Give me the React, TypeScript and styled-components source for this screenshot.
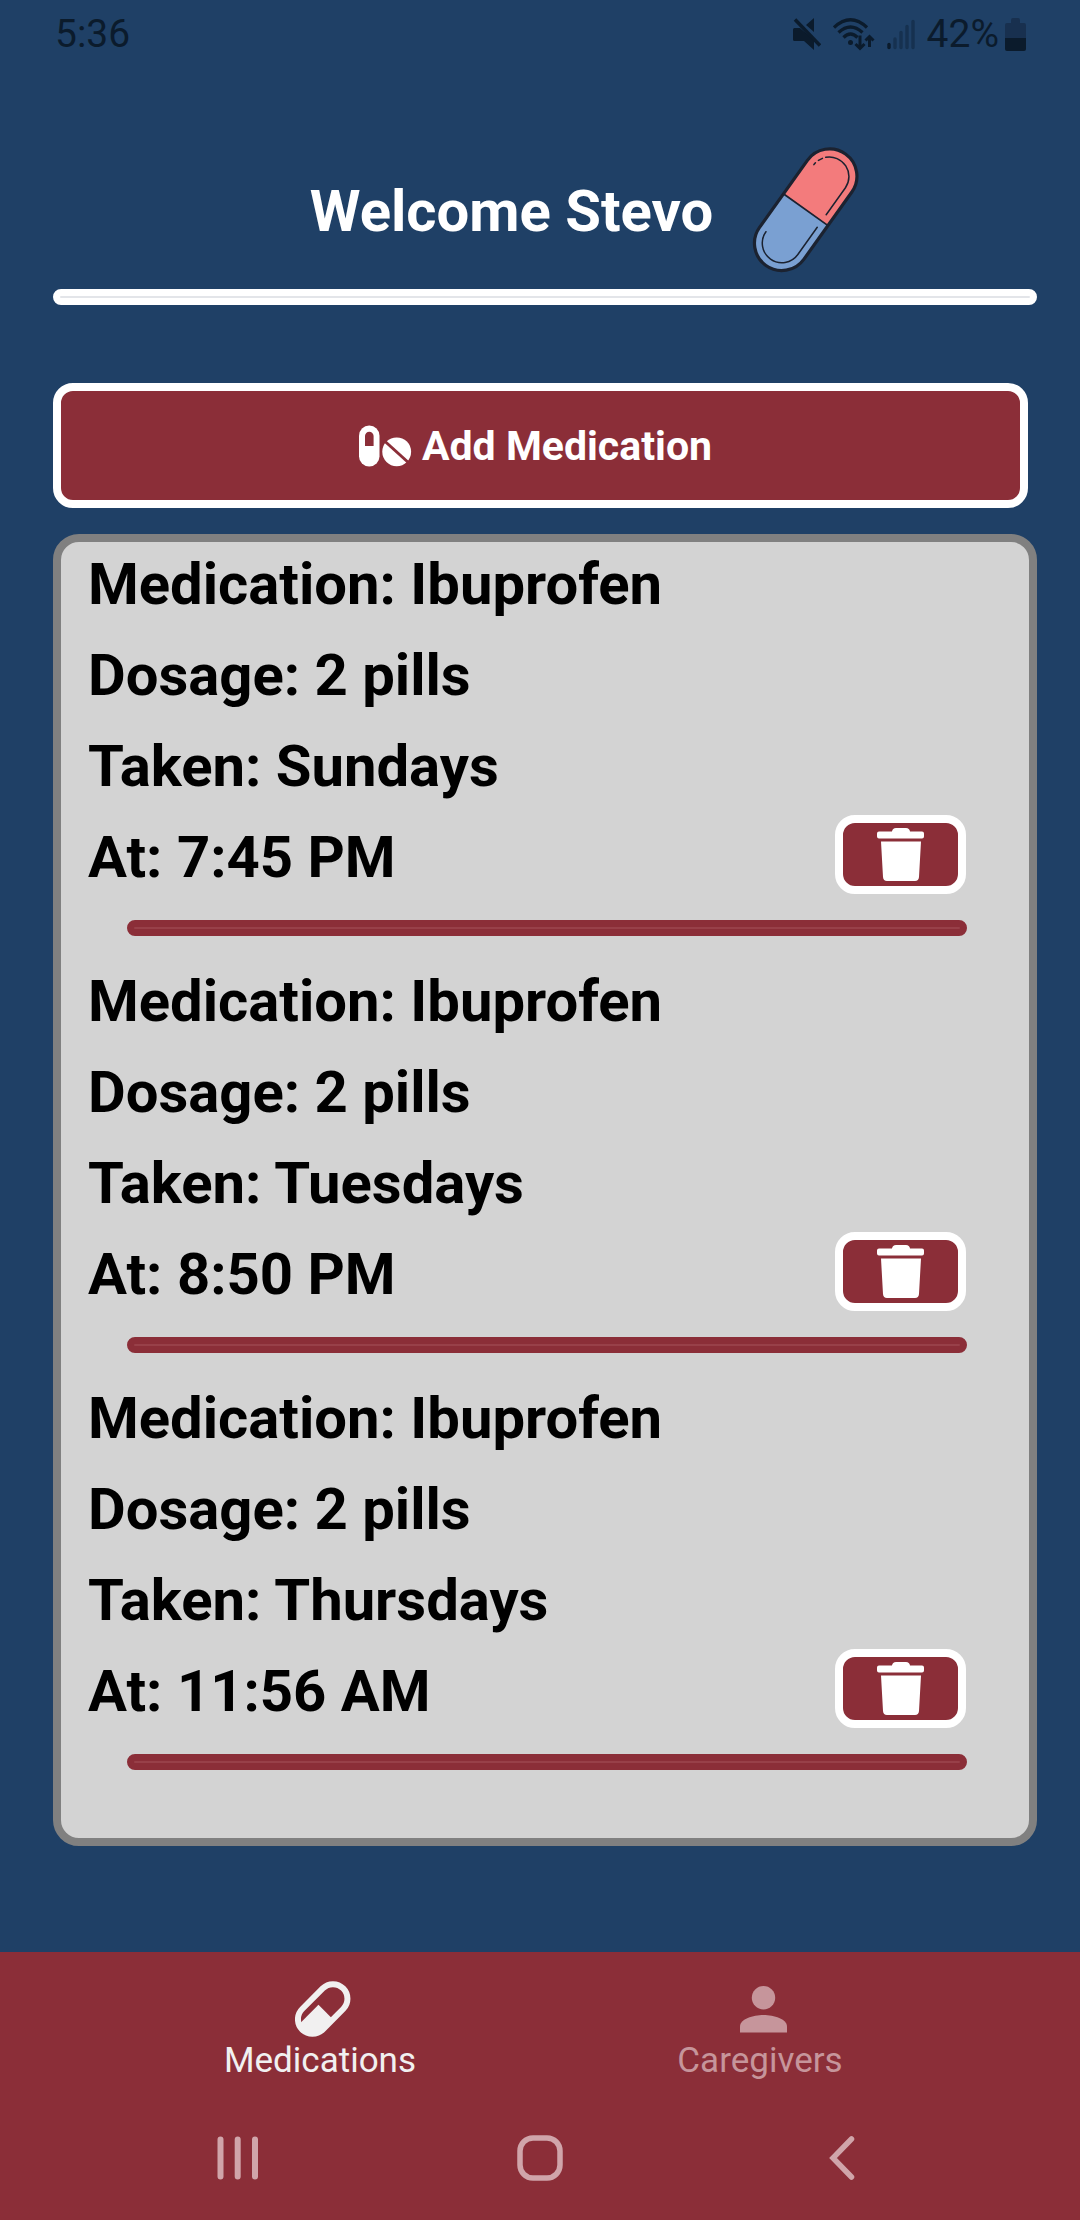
import React from "react";
import styled, { createGlobalStyle } from "styled-components";

const navy = "#1f4066";
const maroon = "#8b2e38";
const ink = "#0b1b2c";

const GlobalStyle = createGlobalStyle`
  *, *::before, *::after { box-sizing: border-box; }
  body { margin: 0; background: ${navy}; font-family: Roboto, "Noto Sans", sans-serif; }
  button { font: inherit; cursor: pointer; }
  svg { display: block; flex: none; }
`;

const Screen = styled.div`
  min-height: 100vh;
  display: flex;
  flex-direction: column;
  background: ${navy};
`;

const StatusBar = styled.div`
  display: flex;
  justify-content: space-between;
  align-items: center;
  padding: 11px 54px 0 55px;
  color: ${ink};
  font-size: 39px;
  line-height: 46px;
`;

const StatusIcons = styled.div`
  display: flex;
  align-items: center;
  gap: 12px;
`;

const Battery = styled.span`
  display: flex;
  align-items: center;
  gap: 6px;
`;

const Main = styled.main`
  flex: 1;
  display: flex;
  flex-direction: column;
  padding: 89px 43px 106px 53px;
`;

const Header = styled.header`
  display: flex;
  justify-content: center;
  align-items: center;
  gap: 39px;
  padding: 0 0 14px 80px;
`;

const Title = styled.h1`
  margin: 0;
  color: #fff;
  font-size: 58px;
  line-height: 68px;
  font-weight: 700;
`;

const Rule = styled.hr<{ $color: string; $line: string }>`
  width: 100%;
  height: 16px;
  margin: 0;
  border: 7px solid ${(p) => p.$color};
  border-radius: 8px;
  background: ${(p) => p.$line};
`;

const AddButton = styled.button`
  display: flex;
  justify-content: center;
  align-items: center;
  gap: 10px;
  height: 125px;
  margin: 78px 9px 26px 0;
  padding: 0 10px 0 0;
  border: 8px solid #fff;
  border-radius: 20px;
  background: ${maroon};
  color: #fff;
  font-size: 41px;
  line-height: 48px;
  font-weight: 700;
`;

const Card = styled.section`
  flex: 1;
  padding: 8px 62px 68px 27px;
  border: 8px solid #808080;
  border-radius: 26px;
  background: #d3d3d3;
`;

const List = styled.ul`
  display: flex;
  flex-direction: column;
  gap: 31px;
  margin: 0;
  padding: 0;
  list-style: none;
`;

const Item = styled.li`
  display: flex;
  flex-direction: column;
  gap: 23px;
  color: #000;
  font-size: 58px;
  line-height: 68px;
  font-weight: 700;
`;

const Line = styled.div`
  display: flex;
  justify-content: space-between;
  height: 68px;
`;

const Divider = styled.div`
  display: flex;
  padding: 6px 0 0 39px;
`;

const DeleteButton = styled.button`
  display: flex;
  justify-content: center;
  align-items: center;
  width: 131px;
  height: 79px;
  margin: -8px 1px 0 0;
  padding: 0;
  border: 8px solid #fff;
  border-radius: 20px;
  background: ${maroon};
`;

const Footer = styled.footer`
  background: ${maroon};
`;

const Tabs = styled.nav`
  display: grid;
  grid-template-columns: 1fr 1fr;
  padding: 26px 100px 0;
`;

const Tab = styled.a<{ $active?: boolean }>`
  display: flex;
  flex-direction: column;
  align-items: center;
  color: ${(p) => (p.$active ? "#f1f0f0" : "#c6959b")};
  font-size: 35px;
  line-height: 42px;
  text-decoration: none;
  svg { margin-left: 6px; }
`;

const SystemBar = styled.div`
  display: grid;
  grid-template-columns: repeat(3, 1fr);
  padding: 53px 87px 39px;
`;

const SystemButton = styled.button`
  display: flex;
  justify-content: center;
  align-items: center;
  padding: 0;
  border: 0;
  background: none;
  color: #d0a5aa;
`;

const MuteIcon = () => (
  <svg width="28" height="32" viewBox="0 0 28 32" fill={ink} aria-hidden="true">
    <path d="M0 11.500Q0 10 1.500 10H7L21 22v10l-10-9H1.500Q0 23 0 21.500zM21 0v14l-8-7z" />
    <path d="M2 1.500l25 26" stroke={ink} strokeWidth="3.500" />
  </svg>
);

const WifiIcon = () => (
  <svg width="42" height="33" viewBox="0 0 42 33" fill="none" stroke={ink} aria-hidden="true">
    <path d="M1 9.500Q17.500-6 34 9.500M5.500 14.500Q17.500 3.500 29.500 14.500M10.500 19.500Q17.500 12.500 24.500 19.500" strokeWidth="3.300" />
    <circle cx="17.500" cy="24.500" r="2.500" fill={ink} stroke="none" />
    <path d="M27 17.500v12M22.500 26l4.500 4.500 4.500-4.500M36.500 29v-10M32.500 22.500l4-4 4 4" strokeWidth="3" />
  </svg>
);

const SignalIcon = () => (
  <svg width="28" height="31" viewBox="0 0 28 31" strokeWidth="3.400" strokeLinecap="round" aria-hidden="true">
    <path d="M2 28.500v-3" stroke={ink} />
    <path d="M8 28.500v-8.500M14 28.500v-15M20 28.500v-21M26 28.500v-26" stroke="#163150" />
  </svg>
);

const BatteryIcon = () => (
  <svg width="21" height="33" viewBox="0 0 21 33" aria-hidden="true">
    <path d="M6 5V2q0-2 2-2h5q2 0 2 2v3h4q2 0 2 2v13H0V7q0-2 2-2z" fill="#18304f" />
    <path d="M0 20h21v11q0 2-2 2H2q-2 0-2-2z" fill={ink} />
  </svg>
);

const CapsuleDrawing = () => (
  <svg width="108" height="129" viewBox="0 0 108 129" aria-hidden="true">
    <g transform="translate(53.700 63.700) rotate(35.500)">
      <path d="M-27.300 0V-41A27.300 27.300 0 0 1 27.300-41V0z" fill="#f37b7c" />
      <path d="M-27.300 0V41A27.300 27.300 0 0 0 27.300 41V0z" fill="#7aa0d2" />
      <g fill="none" stroke="#1b2230" strokeLinecap="round">
        <rect x="-27.300" y="-68.500" width="54.600" height="137" rx="27.300" strokeWidth="3.200" />
        <path d="M-27 0H27" strokeWidth="1.800" />
        <path
          d="M-14.100-54.300A19.600 19.600 0 0 1 19.600-41V-7.800M-16.200-51.500L-18.200-47.500M-19.300-43.800L-19.500-41.500M-19.600 41A19.600 19.600 0 0 0 19.600 41V7.600"
          strokeWidth="1.500"
        />
      </g>
    </g>
  </svg>
);

const AddIcon = () => (
  <svg width="53" height="42" viewBox="0 0 53 42" aria-hidden="true">
    <rect x="0" y="0.500" width="20.500" height="41" rx="10.250" fill="#fff" />
    <path d="M6 21V11a4.300 4.300 0 0 1 8.600 0v10z" fill={maroon} />
    <circle cx="37.700" cy="26.800" r="14.400" fill="#fff" />
    <path d="M25 15.500l26 23.500" stroke={maroon} strokeWidth="3" />
  </svg>
);

const TrashIcon = () => (
  <svg width="48" height="54" viewBox="0 0 48 54" fill="#fff" aria-hidden="true">
    <path d="M2 3.500h13Q15.500 0 19 0h10q3.500 0 4 3.500h12q2 0 2 2v3q0 2-2 2H2q-2 0-2-2v-3q0-2 2-2zM4 13.500h40L42 49q-.300 4-4 4H10q-3.700 0-4-4z" />
  </svg>
);

const PillTabIcon = () => (
  <svg width="56" height="62" viewBox="0 0 56 62" aria-hidden="true">
    <g transform="translate(27.700 31) rotate(45)">
      <rect x="-14.500" y="-29" width="29" height="58" rx="14.500" fill="none" stroke="currentColor" strokeWidth="6" />
      <path d="M-6 0H13V15A13 13 0 0 1-6 26z" fill="currentColor" />
    </g>
  </svg>
);

const PersonIcon = () => (
  <svg width="47" height="62" viewBox="0 0 47 62" fill="currentColor" aria-hidden="true">
    <circle cx="23.500" cy="19.700" r="11.700" />
    <path d="M0 54.500v-6C0 41 13 37 23.500 37S47 41 47 48.500v6z" />
  </svg>
);

const medications = [
  { name: "Ibuprofen", dosage: "2 pills", days: "Sundays", time: "7:45 PM" },
  { name: "Ibuprofen", dosage: "2 pills", days: "Tuesdays", time: "8:50 PM" },
  { name: "Ibuprofen", dosage: "2 pills", days: "Thursdays", time: "11:56 AM" },
];

export default function App() {
  return (
    <>
      <GlobalStyle />
      <Screen>
        <StatusBar>
          <span>5:36</span>
          <StatusIcons>
            <MuteIcon />
            <WifiIcon />
            <SignalIcon />
            <Battery>
              42%
              <BatteryIcon />
            </Battery>
          </StatusIcons>
        </StatusBar>
        <Main>
          <Header>
            <Title>Welcome Stevo</Title>
            <CapsuleDrawing />
          </Header>
          <Rule $color="#fff" $line="#e3e5e9" />
          <AddButton type="button">
            <AddIcon />
            Add Medication
          </AddButton>
          <Card>
            <List>
              {medications.map((m) => (
                <Item key={m.days}>
                  <Line>Medication: {m.name}</Line>
                  <Line>Dosage: {m.dosage}</Line>
                  <Line>Taken: {m.days}</Line>
                  <Line>
                    At: {m.time}
                    <DeleteButton type="button" aria-label={`Delete ${m.name}, ${m.days}`}>
                      <TrashIcon />
                    </DeleteButton>
                  </Line>
                  <Divider>
                    <Rule $color={maroon} $line="#984049" />
                  </Divider>
                </Item>
              ))}
            </List>
          </Card>
        </Main>
        <Footer>
          <Tabs>
            <Tab href="#medications" $active aria-current="page">
              <PillTabIcon />
              Medications
            </Tab>
            <Tab href="#caregivers">
              <PersonIcon />
              Caregivers
            </Tab>
          </Tabs>
          <SystemBar>
            <SystemButton type="button" aria-label="Recent apps">
              <svg width="42" height="44" viewBox="0 0 42 44" stroke="currentColor" strokeWidth="6" strokeLinecap="round">
                <path d="M3.500 3.500v37M20.700 3.500v37M38 3.500v37" />
              </svg>
            </SystemButton>
            <SystemButton type="button" aria-label="Home">
              <svg width="46" height="46" viewBox="0 0 46 46" fill="none" stroke="currentColor" strokeWidth="5.500">
                <rect x="3" y="3" width="40" height="40" rx="13" />
              </svg>
            </SystemButton>
            <SystemButton type="button" aria-label="Back">
              <svg width="26" height="44" viewBox="0 0 26 44" fill="none" stroke="currentColor" strokeWidth="5.500" strokeLinecap="round">
                <path d="M22.500 3L4 22l18.500 19" />
              </svg>
            </SystemButton>
          </SystemBar>
        </Footer>
      </Screen>
    </>
  );
}
